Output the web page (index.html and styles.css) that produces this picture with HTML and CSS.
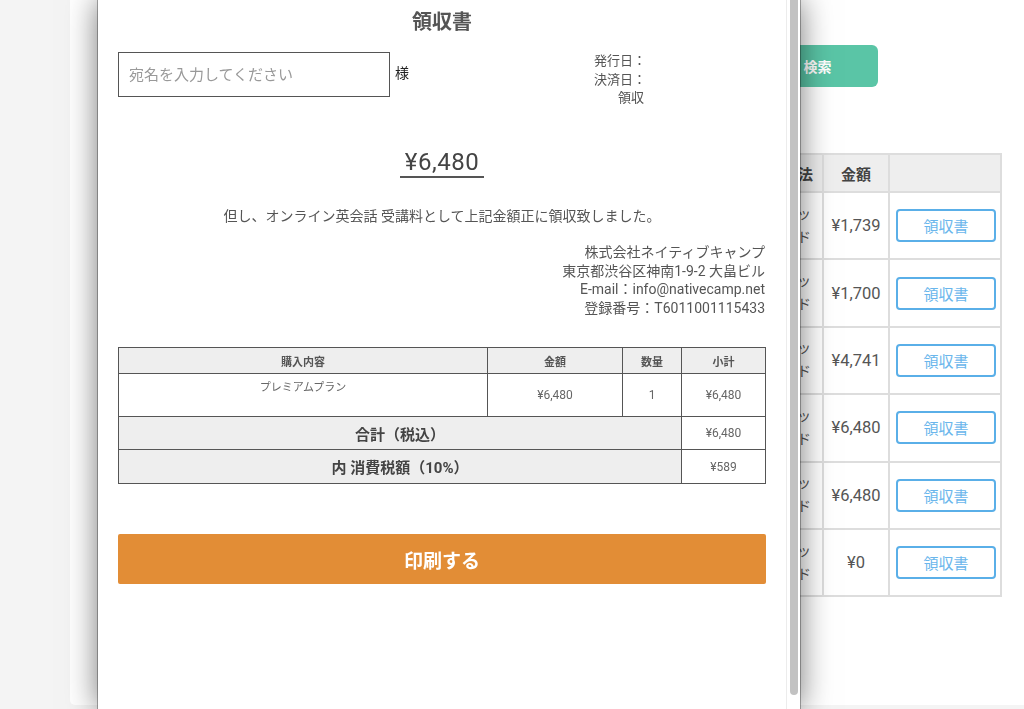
FILE: index.html
```html
<!DOCTYPE html>
<html lang="ja">
<head>
<meta charset="utf-8">
<title>領収書</title>
<link rel="stylesheet" href="styles.css">
</head>
<body>
<div class="page">
  <div class="card">
    <div class="search-row"><button class="search-btn">検索</button></div>
    <table class="history">
      <colgroup><col class="col-date"><col class="col-method"><col class="col-amount"><col class="col-action"></colgroup>
      <thead>
        <tr><th>日付</th><th>支払方法</th><th>金額</th><th></th></tr>
      </thead>
      <tbody>
        <tr><td>2024/06/01</td><td class="method">クレジットカード</td><td class="amount">¥1,739</td><td><button class="receipt-btn">領収書</button></td></tr>
        <tr><td>2024/05/01</td><td class="method">クレジットカード</td><td class="amount">¥1,700</td><td><button class="receipt-btn">領収書</button></td></tr>
        <tr><td>2024/04/01</td><td class="method">クレジットカード</td><td class="amount">¥4,741</td><td><button class="receipt-btn">領収書</button></td></tr>
        <tr><td>2024/03/01</td><td class="method">クレジットカード</td><td class="amount">¥6,480</td><td><button class="receipt-btn">領収書</button></td></tr>
        <tr><td>2024/02/01</td><td class="method">クレジットカード</td><td class="amount">¥6,480</td><td><button class="receipt-btn">領収書</button></td></tr>
        <tr><td>2024/01/01</td><td class="method">クレジットカード</td><td class="amount">¥0</td><td><button class="receipt-btn">領収書</button></td></tr>
      </tbody>
    </table>
  </div>
</div>

<div class="modal">
  <div class="modal-body">
    <h1 class="title">領収書</h1>
    <div class="head-row">
      <div class="addressee">
        <input class="name-input" type="text" placeholder="宛名を入力してください">
        <span class="sama">様</span>
      </div>
      <div class="dates">
        <div>発行日：</div>
        <div>決済日：</div>
        <div class="receipt-no">領収</div>
      </div>
    </div>
    <div class="total"><span class="total-value">¥6,480</span></div>
    <p class="proviso">但し、オンライン英会話 受講料として上記金額正に領収致しました。</p>
    <div class="company">
      <div>株式会社ネイティブキャンプ</div>
      <div>東京都渋谷区神南1-9-2 大畠ビル</div>
      <div>E-mail：info@nativecamp.net</div>
      <div>登録番号：T6011001115433</div>
    </div>
    <table class="detail">
      <colgroup><col class="d-item"><col class="d-price"><col class="d-qty"><col class="d-sub"></colgroup>
      <thead>
        <tr><th>購入内容</th><th>金額</th><th>数量</th><th>小計</th></tr>
      </thead>
      <tbody>
        <tr class="item-row"><td class="item">プレミアムプラン</td><td>¥6,480</td><td>1</td><td>¥6,480</td></tr>
        <tr class="sum-row"><td class="sum-label" colspan="3">合計（税込）</td><td>¥6,480</td></tr>
        <tr class="tax-row"><td class="sum-label" colspan="3">内 消費税額（10%）</td><td>¥589</td></tr>
      </tbody>
    </table>
    <button class="print-btn">印刷する</button>
  </div>
  <div class="scrollbar"><div class="thumb"></div></div>
</div>
</body>
</html>
```

FILE: styles.css
```css
* { box-sizing: border-box; }

html, body {
  margin: 0;
  height: 709px;
  overflow: hidden;
}

body {
  background: #f4f4f4;
  font-family: Roboto, "Noto Sans CJK JP", sans-serif;
  color: #555;
}

/* background page */
.page {
  padding-left: 70px;
}

.card {
  width: 954px;
  height: 705px;
  background: #fff;
  border-radius: 0 0 0 5px;
  padding: 45px 22px 0 0;
  display: flex;
  flex-direction: column;
  align-items: flex-end;
}

.search-row {
  display: flex;
  justify-content: flex-end;
  padding-right: 124px;
  width: 100%;
}

.search-btn {
  width: 125px;
  height: 42px;
  border: none;
  border-radius: 6px;
  background: #5ac5a6;
  color: #fff;
  font-family: inherit;
  font-size: 14px;
  font-weight: bold;
  padding: 0 0 0 4px;
}

.history {
  margin-top: 66px;
  width: 900px;
  table-layout: fixed;
  border-collapse: collapse;
  font-size: 16px;
}

.col-method { width: 80px; }
.col-amount { width: 66px; }
.col-action { width: 112px; }

.history th,
.history td {
  border: 2px solid #ddd;
  text-align: center;
}

.history th {
  background: #eee;
  height: 38px;
  font-size: 15px;
  font-weight: bold;
  color: #444;
}

.history td {
  height: 67.4px;
  padding: 0 6px;
  color: #555;
}

.history td.amount {
  padding: 0;
  font-size: 16.5px;
  color: #555;
}

.history td.method {
  padding: 0 8px;
  font-size: 14px;
  line-height: 23px;
  word-break: break-all;
}

.receipt-btn {
  width: 100px;
  height: 33px;
  border: 2px solid #5aafe8;
  border-radius: 4px;
  background: #fff;
  color: #6ab6ec;
  font-family: inherit;
  font-size: 15px;
}

/* modal */
.modal {
  position: fixed;
  top: 0;
  left: 98px;
  width: 702px;
  height: 709px;
  background: #fff;
  display: flex;
  box-shadow: 0 0 0 1px rgba(0, 0, 0, 0.3), 0 0 30px rgba(0, 0, 0, 0.55);
}

.modal-body {
  flex: 1;
  padding: 10px 20px 0;
}

.scrollbar {
  width: 15px;
  border-left: 1px solid #ececec;
  padding: 0 3px;
}

.thumb {
  height: 695px;
  width: 8px;
  border-radius: 0 0 4px 4px;
  background: #c2c2c2;
}

.title {
  margin: 0;
  font-size: 20px;
  line-height: 24px;
  font-weight: bold;
  text-align: center;
  color: #555;
}

.head-row {
  display: flex;
  align-items: flex-start;
  margin-top: 18px;
  height: 45px;
}

.addressee {
  display: flex;
  align-items: center;
  gap: 5px;
}

.name-input {
  width: 272px;
  height: 45px;
  border: 1px solid #555;
  padding: 0 10px;
  font-family: inherit;
  font-size: 15px;
  color: #333;
  outline: none;
}

.name-input::placeholder {
  color: #999;
}

.sama {
  font-size: 14px;
  color: #222;
  margin-bottom: 5px;
}

.dates {
  margin-left: auto;
  margin-right: 120px;
  text-align: right;
  font-size: 13px;
  line-height: 18.5px;
  color: #555;
}

.receipt-no {
  margin-right: 2px;
}

.total {
  margin-top: 51px;
  text-align: center;
}

.total-value {
  display: inline-block;
  padding: 0 5px;
  font-size: 24px;
  line-height: 28px;
  letter-spacing: 0.5px;
  color: #444;
  border-bottom: 2px solid #555;
}

.proviso {
  margin: 28px 0 0;
  text-align: center;
  font-size: 14px;
  line-height: 20px;
  color: #555;
}

.company {
  margin-top: 17px;
  padding-right: 1px;
  text-align: right;
  font-size: 14px;
  line-height: 18.5px;
  color: #555;
}

.detail {
  margin-top: 30px;
  width: 100%;
  table-layout: fixed;
  border-collapse: collapse;
  border: 1px solid #555;
  font-size: 12px;
  color: #666;
}

.d-item { width: 369px; }
.d-price { width: 135px; }
.d-qty { width: 59px; }
.d-sub { width: 84px; }

.detail th,
.detail td {
  border: 1px solid #555;
  text-align: center;
  padding: 0;
}

.detail th {
  background: #eee;
  height: 26px;
  font-size: 11px;
  font-weight: bold;
  color: #555;
}

.item-row td {
  height: 43px;
}

.detail td.item {
  vertical-align: top;
  padding-top: 4px;
  font-size: 11px;
}

.sum-row td {
  height: 33px;
}

.tax-row td {
  height: 34px;
}

.detail td.sum-label {
  background: #eee;
  font-size: 15px;
  font-weight: bold;
  color: #444;
}

.print-btn {
  display: block;
  width: 100%;
  height: 50px;
  margin-top: 50px;
  border: none;
  border-radius: 2px;
  background: #e28d36;
  color: #fff;
  font-family: inherit;
  font-size: 19px;
  font-weight: bold;
}
```
